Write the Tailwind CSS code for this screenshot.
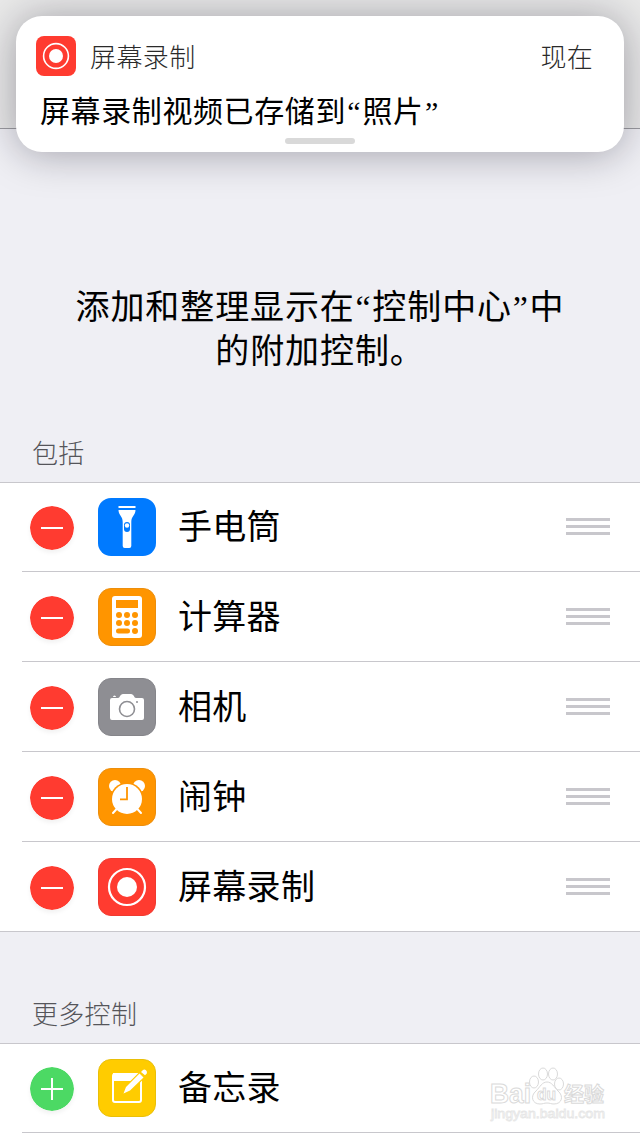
<!DOCTYPE html>
<html lang="zh-CN">
<head>
  <meta charset="UTF-8" />
  <meta name="viewport" content="width=device-width, initial-scale=1.0"/>
  <title>自定控制</title>
  <script src="https://cdn.jsdelivr.net/npm/@tailwindcss/browser@4"></script>
</head>
<body class="relative h-[1136px] overflow-hidden bg-[#efeff4] font-['Noto_Sans','Noto_Sans_CJK_SC',sans-serif] font-normal text-black">
  <!-- nav bar -->
  <header class="h-[129px] border-b border-[#9b9ba0] bg-[#e9e9e9]"></header>

  <!-- notification banner -->
  <section class="absolute left-4 top-4 flex h-[136px] w-[608px] flex-col rounded-[26px] bg-white shadow-[0_2px_40px_rgba(15,12,30,0.34)]">
    <div class="flex items-center pl-5 pr-[31px] pt-5">
      <svg class="h-10 w-10" viewBox="0 0 40 40">
        <rect width="40" height="40" rx="8" fill="#ff3b30"/>
        <circle cx="20" cy="20" r="12.4" fill="none" stroke="#fff" stroke-width="1.6"/>
        <circle cx="20" cy="20" r="7" fill="#fff"/>
      </svg>
      <span class="relative top-px ml-[14px] text-[26px] leading-10 font-light tracking-[0.4px] text-[#2a2a2a]">屏幕录制</span>
      <span class="relative top-px ml-auto text-[26px] leading-10 font-light tracking-[0.3px] text-[#2a2a2a]">现在</span>
    </div>
    <p class="ml-6 mt-[15px] h-10 text-[30px] leading-10 tracking-[0.6px] whitespace-nowrap">屏幕录制视频已存储到<span class="px-[1.3px] font-['Liberation_Serif'] leading-none">“</span>照片<span class="px-[1.3px] font-['Liberation_Serif'] leading-none">”</span></p>
    <div class="mx-auto mt-[7px] h-[6px] w-[70px] shrink-0 rounded-full bg-[#d9d9d9]"></div>
  </section>

  <main>
    <p class="h-[243px] pt-[155px] text-center text-[34px] leading-[44px] tracking-[0.9px]">添加和整理显示在<span class="px-[0.8px] font-['Liberation_Serif'] leading-none">“</span>控制中心<span class="px-[0.8px] font-['Liberation_Serif'] leading-none">”</span>中<br/>的附加控制。</p>

    <h2 class="mt-[61px] h-[49px] pl-8 text-[26px] leading-10 font-light tracking-[0.3px] text-[#55555a]">包括</h2>
    <ul class="border-y border-[#c8c7cc] bg-white text-[34px] leading-[58px] tracking-[0.3px]">
      <li class="pl-[22px]">
        <div class="flex h-[89px] items-end border-b border-[#c8c7cc] pb-[15px] pl-2 pr-[30px]">
          <svg class="mb-[6px] h-11 w-11 rounded-full shadow-[0_3px_4px_rgba(0,0,0,0.05)]" viewBox="0 0 44 44"><circle cx="22" cy="22" r="22" fill="#ff3b30"/><path d="M11 22h22" stroke="#fff" stroke-width="2"/></svg>
          <svg class="ml-6 h-[58px] w-[58px]" viewBox="0 0 58 58">
            <rect width="58" height="58" rx="13" fill="#007aff"/>
            <path d="M20.5 8h17v2h-17zM20.5 12h17c0 5-4.200 6-4.200 12v24q0 2-2 2h-4.600q-2 0-2-2V24c0-6-4.200-7-4.200-12z" fill="#fff"/>
            <rect x="26" y="24" width="6" height="10" rx="3" fill="#007aff"/>
            <circle cx="29" cy="27.500" r="2.200" fill="#fff"/>
          </svg>
          <span class="mb-px ml-[22px]">手电筒</span>
          <div class="mb-[21px] ml-auto h-[17px] w-11 space-y-1"><div class="h-[3px] bg-[#c8c7cc]"></div><div class="h-[3px] bg-[#c8c7cc]"></div><div class="h-[3px] bg-[#c8c7cc]"></div></div>
        </div>
      </li>
      <li class="pl-[22px]">
        <div class="flex h-[90px] items-end border-b border-[#c8c7cc] pb-[15px] pl-2 pr-[30px]">
          <svg class="mb-[6px] h-11 w-11 rounded-full shadow-[0_3px_4px_rgba(0,0,0,0.05)]" viewBox="0 0 44 44"><circle cx="22" cy="22" r="22" fill="#ff3b30"/><path d="M11 22h22" stroke="#fff" stroke-width="2"/></svg>
          <svg class="ml-6 h-[58px] w-[58px]" viewBox="0 0 58 58">
            <rect x="0.500" y="0.500" width="57" height="57" rx="12.500" fill="#ff9500" stroke="#ec8e0c"/>
            <rect x="14" y="8" width="30" height="42" rx="3" fill="#fff"/>
            <g fill="#ff9500">
              <rect x="18" y="12" width="22" height="8"/>
              <circle cx="21" cy="27" r="3"/><circle cx="29" cy="27" r="3"/><circle cx="37" cy="27" r="3"/>
              <circle cx="21" cy="35" r="3"/><circle cx="29" cy="35" r="3"/><circle cx="37" cy="35" r="3"/>
              <rect x="18" y="40.500" width="14" height="5" rx="2.500"/><circle cx="37" cy="43" r="3"/>
            </g>
          </svg>
          <span class="mb-px ml-[22px]">计算器</span>
          <div class="mb-[21px] ml-auto h-[17px] w-11 space-y-1"><div class="h-[3px] bg-[#c8c7cc]"></div><div class="h-[3px] bg-[#c8c7cc]"></div><div class="h-[3px] bg-[#c8c7cc]"></div></div>
        </div>
      </li>
      <li class="pl-[22px]">
        <div class="flex h-[90px] items-end border-b border-[#c8c7cc] pb-[15px] pl-2 pr-[30px]">
          <svg class="mb-[6px] h-11 w-11 rounded-full shadow-[0_3px_4px_rgba(0,0,0,0.05)]" viewBox="0 0 44 44"><circle cx="22" cy="22" r="22" fill="#ff3b30"/><path d="M11 22h22" stroke="#fff" stroke-width="2"/></svg>
          <svg class="ml-6 h-[58px] w-[58px]" viewBox="0 0 58 58">
            <rect x="0.500" y="0.500" width="57" height="57" rx="12.500" fill="#8e8e93" stroke="#85858a"/>
            <path d="M14 20h6c2 0 2-4 5-4h8c3 0 3 4 5 4h6q2 0 2 2v18q0 2-2 2H14q-2 0-2-2V22q0-2 2-2zM15 19q0-1.500 1.500-1.500T18 19z" fill="#fff"/>
            <circle cx="29" cy="31" r="7.500" fill="#fff" stroke="#8e8e93" stroke-width="1.600"/>
            <circle cx="39" cy="24" r="1" fill="#8e8e93"/>
          </svg>
          <span class="mb-px ml-[22px]">相机</span>
          <div class="mb-[21px] ml-auto h-[17px] w-11 space-y-1"><div class="h-[3px] bg-[#c8c7cc]"></div><div class="h-[3px] bg-[#c8c7cc]"></div><div class="h-[3px] bg-[#c8c7cc]"></div></div>
        </div>
      </li>
      <li class="pl-[22px]">
        <div class="flex h-[90px] items-end border-b border-[#c8c7cc] pb-[15px] pl-2 pr-[30px]">
          <svg class="mb-[6px] h-11 w-11 rounded-full shadow-[0_3px_4px_rgba(0,0,0,0.05)]" viewBox="0 0 44 44"><circle cx="22" cy="22" r="22" fill="#ff3b30"/><path d="M11 22h22" stroke="#fff" stroke-width="2"/></svg>
          <svg class="ml-6 h-[58px] w-[58px]" viewBox="0 0 58 58">
            <rect x="0.500" y="0.500" width="57" height="57" rx="12.500" fill="#ff9500" stroke="#ec8e0c"/>
            <circle cx="17" cy="18" r="6" fill="#fff"/><circle cx="41" cy="18" r="6" fill="#fff"/>
            <circle cx="29" cy="31" r="16.500" fill="#ff9500"/>
            <path d="M20 39.500L15 45M38 39.500l5 5.500" stroke="#fff" stroke-width="2" stroke-linecap="round"/>
            <circle cx="29" cy="31" r="15" fill="#fff"/>
            <path d="M29 19v12.300h-7" fill="none" stroke="#ff9500" stroke-width="1.800"/>
          </svg>
          <span class="mb-px ml-[22px]">闹钟</span>
          <div class="mb-[21px] ml-auto h-[17px] w-11 space-y-1"><div class="h-[3px] bg-[#c8c7cc]"></div><div class="h-[3px] bg-[#c8c7cc]"></div><div class="h-[3px] bg-[#c8c7cc]"></div></div>
        </div>
      </li>
      <li class="pl-[22px]">
        <div class="flex h-[89px] items-end pb-[15px] pl-2 pr-[30px]">
          <svg class="mb-[6px] h-11 w-11 rounded-full shadow-[0_3px_4px_rgba(0,0,0,0.05)]" viewBox="0 0 44 44"><circle cx="22" cy="22" r="22" fill="#ff3b30"/><path d="M11 22h22" stroke="#fff" stroke-width="2"/></svg>
          <svg class="ml-6 h-[58px] w-[58px]" viewBox="0 0 58 58">
            <rect x="0.500" y="0.500" width="57" height="57" rx="12.500" fill="#ff3b30" stroke="#f03a30"/>
            <circle cx="29" cy="29" r="18" fill="none" stroke="#fff" stroke-width="2.200"/>
            <circle cx="29" cy="29" r="10" fill="#fff"/>
          </svg>
          <span class="mb-px ml-[22px]">屏幕录制</span>
          <div class="mb-[21px] ml-auto h-[17px] w-11 space-y-1"><div class="h-[3px] bg-[#c8c7cc]"></div><div class="h-[3px] bg-[#c8c7cc]"></div><div class="h-[3px] bg-[#c8c7cc]"></div></div>
        </div>
      </li>
    </ul>

    <h2 class="mt-[62px] h-[49px] pl-8 text-[26px] leading-10 font-light tracking-[0.3px] text-[#55555a]">更多控制</h2>
    <ul class="border-t border-[#c8c7cc] bg-white text-[34px] leading-[58px] tracking-[0.3px]">
      <li class="pl-[22px]">
        <div class="flex h-[89px] items-end border-b border-[#c8c7cc] pb-[15px] pl-2 pr-[30px]">
          <svg class="mb-[6px] h-11 w-11 rounded-full shadow-[0_3px_4px_rgba(0,0,0,0.05)]" viewBox="0 0 44 44"><circle cx="22" cy="22" r="22" fill="#4cd964"/><path d="M11 22h22M22 11v22" stroke="#fff" stroke-width="2"/></svg>
          <svg class="ml-6 h-[58px] w-[58px]" viewBox="0 0 58 58">
            <rect x="0.500" y="0.500" width="57" height="57" rx="12.500" fill="#ffcc00" stroke="#e9bf08"/>
            <rect x="15" y="15" width="28" height="28" rx="2" fill="none" stroke="#fff" stroke-width="2"/>
            <path d="M15 14h28v8H15z" fill="#fff"/>
            <path d="M26 34L44 16l5-5" stroke="#ffcc00" stroke-width="8"/>
            <path d="M25.500 34.500l2.500-6.500L41.500 14.500l4 4L32 31.500zM43 13l2-2q1.500-1.200 3 .3t.8 3.200l-1.800 1.800z" fill="#fff"/>
          </svg>
          <span class="mb-px ml-[22px]">备忘录</span>
        </div>
      </li>
      <li class="h-[3px]"></li>
    </ul>
  </main>

  <!-- watermark -->
  <svg class="absolute left-[486px] top-[1062px] h-[64px] w-[124px]" viewBox="0 0 124 64" fill="#fff" stroke="#dadada" stroke-width="1">
    <text x="4" y="41" font-family="Liberation Sans" font-weight="bold" font-size="27" textLength="41" lengthAdjust="spacingAndGlyphs">Bai</text>
    <ellipse cx="48" cy="20" rx="4.500" ry="6"/><ellipse cx="57" cy="12" rx="4.500" ry="6"/><ellipse cx="67" cy="12" rx="4.500" ry="6"/><ellipse cx="73" cy="22" rx="4.500" ry="6"/>
    <path d="M61 20c5 0 7 5 11 9 6 5 4 13-4 13-3 0-4-1-7-1s-4 1-7 1c-8 0-10-8-4-13 4-4 6-9 11-9z"/>
    <text x="51" y="38" font-family="Liberation Sans" font-weight="bold" font-size="17" textLength="19" lengthAdjust="spacingAndGlyphs">du</text>
    <text x="78" y="40" font-family="Noto Sans CJK SC" font-weight="bold" font-size="20" textLength="40">经验</text>
    <text x="5" y="56" font-family="Liberation Sans" font-size="13" stroke="#e6e6e6" stroke-width="0.800" textLength="114" lengthAdjust="spacingAndGlyphs">jingyan.baidu.com</text>
  </svg>
</body>
</html>
